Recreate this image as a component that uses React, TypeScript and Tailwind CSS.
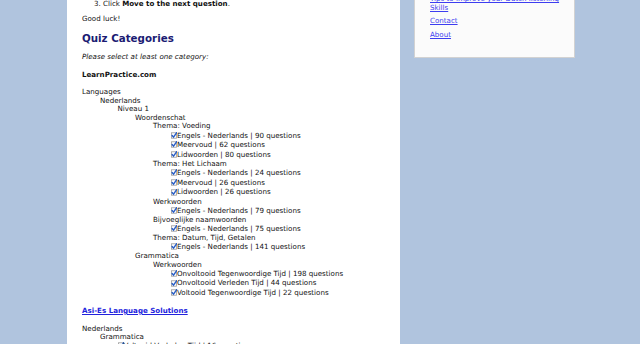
type Row = { level: number; text: string; cb?: boolean }

const indent = ['pl-0', 'pl-[18px]', 'pl-[35.5px]', 'pl-[53px]', 'pl-[71px]', 'pl-[89px]']

const learnPractice: Row[] = [
  { level: 0, text: 'Languages' },
  { level: 1, text: 'Nederlands' },
  { level: 2, text: 'Niveau 1' },
  { level: 3, text: 'Woordenschat' },
  { level: 4, text: 'Thema: Voeding' },
  { level: 5, text: 'Engels - Nederlands | 90 questions', cb: true },
  { level: 5, text: 'Meervoud | 62 questions', cb: true },
  { level: 5, text: 'Lidwoorden | 80 questions', cb: true },
  { level: 4, text: 'Thema: Het Lichaam' },
  { level: 5, text: 'Engels - Nederlands | 24 questions', cb: true },
  { level: 5, text: 'Meervoud | 26 questions', cb: true },
  { level: 5, text: 'Lidwoorden | 26 questions', cb: true },
  { level: 4, text: 'Werkwoorden' },
  { level: 5, text: 'Engels - Nederlands | 79 questions', cb: true },
  { level: 4, text: 'Bijvoeglijke naamwoorden' },
  { level: 5, text: 'Engels - Nederlands | 75 questions', cb: true },
  { level: 4, text: 'Thema: Datum, Tijd, Getalen' },
  { level: 5, text: 'Engels - Nederlands | 141 questions', cb: true },
  { level: 3, text: 'Grammatica' },
  { level: 4, text: 'Werkwoorden' },
  { level: 5, text: 'Onvoltooid Tegenwoordige Tijd | 198 questions', cb: true },
  { level: 5, text: 'Onvoltooid Verleden Tijd | 44 questions', cb: true },
  { level: 5, text: 'Voltooid Tegenwoordige Tijd | 22 questions', cb: true },
]

const asiEs: Row[] = [
  { level: 0, text: 'Nederlands' },
  { level: 1, text: 'Grammatica' },
  { level: 2, text: 'Voltooid Verleden Tijd | 16 questions', cb: true },
]

function CheckBox() {
  return (
    <svg width="6" height="7" viewBox="0 0 6 7" className="shrink-0">
      <rect x="0.5" y="0.8" width="5" height="5.4" fill="#fff" stroke="#9a9a9a" strokeWidth="0.8" />
      <path d="M1.1 3.5 L2.5 5.2 L5.7 0.6" fill="none" stroke="#2a5fc6" strokeWidth="1.4" strokeLinecap="round" />
    </svg>
  )
}

function Tree({ rows }: { rows: Row[] }) {
  return (
    <div>
      {rows.map((row, i) => (
        <div
          key={i}
          className={`flex items-center whitespace-nowrap ${indent[row.level]} ${row.cb ? 'h-[9.7px]' : 'h-[8.5px]'}`}
        >
          {row.cb && <CheckBox />}
          <span>{row.text}</span>
        </div>
      ))}
    </div>
  )
}

export default function App() {
  return (
    <div
      className="flex h-screen overflow-hidden bg-[#b0c4de] text-[7.1px] leading-[9.3px] text-[#111]"
      style={{ fontFamily: '"DejaVu Sans", Verdana, sans-serif' }}
    >
      <div className="w-[67px] shrink-0" />

      {/* main column */}
      <main className="w-[333px] shrink-0 bg-white pl-[15px] pr-[12px]">
        <ol start={3} className="list-decimal pl-[21px] -mt-[0.6px]">
          <li>
            Click <b>Move to the next question</b>.
          </li>
        </ol>

        <p className="mt-[5.7px]">Good luck!</p>

        <h2 className="mt-[8px] text-[10.3px] leading-[12px] font-bold text-[#1b1b73]">Quiz Categories</h2>

        <p className="mt-[8.4px] italic">Please select at least one category:</p>

        <p className="mt-[8.7px] font-bold">LearnPractice.com</p>

        <div className="mt-[8.5px]">
          <Tree rows={learnPractice} />
        </div>

        <p className="mt-[8.2px]">
          <a href="#" className="font-bold text-[#2222dd] underline">
            Asi-Es Language Solutions
          </a>
        </p>

        <div className="mt-[9px]">
          <Tree rows={asiEs} />
        </div>
      </main>

      {/* sidebar */}
      <aside className="ml-[14px] w-[161px] h-[58px] shrink-0 bg-[#fbfbfb] border-x border-b border-[#d2d2d2] pl-[15px] pr-[6px]">
        <ul className="-mt-[6px]">
          <li>
            <a href="#" className="text-[#3d3df0] underline whitespace-nowrap">
              Tips to improve your Dutch listening
            </a>
            <br />
            <a href="#" className="text-[#3d3df0] underline">
              Skills
            </a>
          </li>
          <li className="mt-[3.6px]">
            <a href="#" className="text-[#3d3df0] underline">
              Contact
            </a>
          </li>
          <li className="mt-[4.2px]">
            <a href="#" className="text-[#3d3df0] underline">
              About
            </a>
          </li>
        </ul>
      </aside>
    </div>
  )
}
